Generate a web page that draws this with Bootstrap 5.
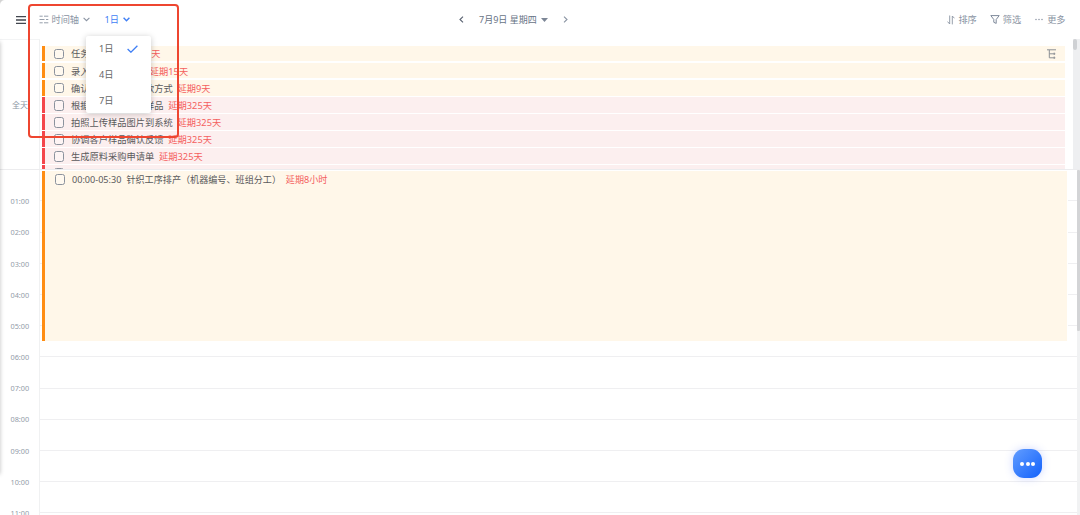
<!DOCTYPE html>
<html lang="zh-CN">
<head>
<meta charset="utf-8">
<title>时间轴</title>
<link rel="stylesheet" href="https://cdn.jsdelivr.net/npm/bootstrap@5.3.0/dist/css/bootstrap.min.css">
<style>
body{font-family:"Noto Sans","Noto Sans CJK SC",sans-serif;font-size:9.25px;line-height:15px;color:#5a5a5c;background:#fff}
svg{display:block;flex:none}
.app{width:1080px;height:515px}
.app::before{content:"";position:absolute;left:-6px;top:42px;width:6px;height:432px;box-shadow:0 0 4px rgba(0,0,0,.25)}
.corner{left:0;top:0;width:5px;height:5px;background:radial-gradient(circle at 5px 5px,#fff 4.5px,#d4d4d4 5.5px)}
.topbar{height:39px;color:#8a94a3;font-size:9.2px;padding-left:16px;padding-right:14.5px}
.topbar .side{width:443px}
.blue{color:#3f7ff5}
.date{color:#687385;font-size:9px}
.allday{height:130px}
.gutter{width:40px;border-right:1px solid #f0f1f2;color:#8c95a3;flex:none}
.allday .gutter{border-top:1px solid #f3f4f5;font-size:8px;padding-left:12px}
.tasks{padding:6.6px 0 0 1.5px;width:1024.5px;gap:1.4px}
.task{height:15.72px;flex:none;border-left:3px solid #ff8d12;background:#fff7e9;padding-left:9px;padding-top:1px}
.task.late{border-color:#f4464b;background:#fcefef}
.box{width:10.5px;height:10.5px;border:1px solid #8b929d;border-radius:2.5px;margin-right:7px;flex:none;background:rgba(255,255,255,.3)}
.due{color:#f4605e;margin-left:4.8px}
.rail{width:7px;background:#eeeff1}
.thumb{width:4px;height:11px;background:#cfd1d4;border-radius:2px}
.timeline{height:346px;border-top:1px solid #ececee}
.timeline .gutter{font-size:7.3px;line-height:10px;padding-top:26.2px;color:#929ba8}
.hour{height:31.18px;padding-left:10.5px}
.hours{width:1037px;padding-top:.3px}
.slot{height:31.18px;border-bottom:1px solid #efeff1}
.event{left:2px;top:1.3px;width:1026px;height:169.3px;border-left:3px solid #ff8d12;background:#fff7e9;border-right:1px solid #fff;padding:.8px 0 0 9.5px;font-size:9.1px}
.rail2{width:3px;background:#f1f2f3}
.rail2 .thumb{width:3px;height:161px;background:#d3d4d6;border-radius:1px}
.picker{left:86px;top:36px;width:65px;height:77px;background:#fff;border-radius:2px;box-shadow:0 1px 6px rgba(0,0,0,.22);color:#666;z-index:3}
.picker .opt{height:26px;padding:0 13px 1px 13px}
.frame{left:28px;top:4px;width:151px;height:134px;border:2px solid #ee4630;border-radius:4px;z-index:4}
.fab{left:1013px;top:449px;width:29px;height:29px;border-radius:11px;background:linear-gradient(135deg,#629dff,#1261fb);box-shadow:0 0 8px rgba(64,100,255,.25);gap:1.7px}
.fab i{width:4px;height:4px;border-radius:50%;background:#fff}
.tree{right:24px;top:49px}
</style>
</head>
<body>
<div class="app position-relative overflow-hidden">
  <div class="corner position-absolute"></div>
  <header class="topbar d-flex align-items-center">
    <div class="side d-flex align-items-center">
      <svg width="10" height="10" viewBox="0 0 10 10" stroke="#41464e" stroke-width="1.3"><path d="M0 1.7h10M0 5h10M0 8.3h10"/></svg>
      <svg style="margin-left:13px" width="10" height="9" viewBox="0 0 10 9" stroke="#8a94a3" stroke-width=".9"><path d="M.5 1.2h3.2M5 1.2h4.3M.5 4.5h5M7 4.5h2.3M.5 7.8h3.2M5 7.8h4.3"/></svg>
      <span style="margin-left:2.5px">时间轴</span>
      <svg style="margin-left:4px" width="7" height="5" viewBox="0 0 7 5" fill="none" stroke="#8a94a3" stroke-width="1.1"><path d="M.6.8 3.5 3.7 6.4.8"/></svg>
      <span class="blue" style="margin-left:14.5px">1日</span>
      <svg style="margin-left:4px" width="7" height="5" viewBox="0 0 7 5" fill="none" stroke="#3f7ff5" stroke-width="1.4"><path d="M.6.8 3.5 3.7 6.4.8"/></svg>
    </div>
    <div class="date d-flex align-items-center">
      <svg width="5" height="7" viewBox="0 0 5 7" fill="none" stroke="#596271" stroke-width="1.1"><path d="M4 .6 1 3.5 4 6.4"/></svg>
      <span style="margin-left:15px">7月9日 星期四</span>
      <svg style="margin-left:4px" width="7" height="4" viewBox="0 0 7 4" fill="#7c8696"><path d="M0 0h7L3.5 4z"/></svg>
      <svg style="margin-left:15px" width="5" height="7" viewBox="0 0 5 7" fill="none" stroke="#8a94a3" stroke-width="1.1"><path d="M1 .6 4 3.5 1 6.4"/></svg>
    </div>
    <div class="d-flex align-items-center ms-auto">
      <svg width="8" height="10" viewBox="0 0 8 10" fill="none" stroke="#8a94a3" stroke-width=".9"><path d="M2.7 .5v8.5L.5 6.6M5.3 9.4V1l2.2 2.3"/></svg>
      <span style="margin-left:3.5px">排序</span>
      <svg style="margin-left:13px" width="10" height="9" viewBox="0 0 10 9" fill="none" stroke="#7e899a"><path d="M.8.6h8.4L6.2 4.5v3.9L3.8 7.3V4.5z"/></svg>
      <span style="margin-left:3px">筛选</span>
      <svg style="margin-left:14px" width="8" height="3" viewBox="0 0 8 3" fill="#8a94a3"><circle cx="1" cy="1.5" r=".75"/><circle cx="4" cy="1.5" r=".75"/><circle cx="7" cy="1.5" r=".75"/></svg>
      <span style="margin-left:4px">更多</span>
    </div>
  </header>

  <section class="allday d-flex overflow-hidden">
    <div class="gutter d-flex align-items-center">全天</div>
    <div class="tasks d-flex flex-column">
      <div class="task d-flex align-items-center"><span class="box"></span>任务单确认<span class="due">延期15天</span></div>
      <div class="task d-flex align-items-center"><span class="box"></span>录入样品开发信息<span class="due">延期15天</span></div>
      <div class="task d-flex align-items-center"><span class="box"></span>确认客户样品与付款方式<span class="due">延期9天</span></div>
      <div class="task late d-flex align-items-center"><span class="box"></span>根据客户要求制作样品<span class="due">延期325天</span></div>
      <div class="task late d-flex align-items-center"><span class="box"></span>拍照上传样品图片到系统<span class="due">延期325天</span></div>
      <div class="task late d-flex align-items-center"><span class="box"></span>协调客户样品确认反馈<span class="due">延期325天</span></div>
      <div class="task late d-flex align-items-center"><span class="box"></span>生成原料采购申请单<span class="due">延期325天</span></div>
      <div class="task late d-flex align-items-center"><span class="box"></span></div>
    </div>
    <div class="rail ms-auto"><div class="thumb"></div></div>
  </section>

  <section class="timeline d-flex overflow-hidden">
    <div class="gutter">
      <div class="hour">01:00</div><div class="hour">02:00</div><div class="hour">03:00</div><div class="hour">04:00</div><div class="hour">05:00</div><div class="hour">06:00</div><div class="hour">07:00</div><div class="hour">08:00</div><div class="hour">09:00</div><div class="hour">10:00</div><div class="hour">11:00</div>
    </div>
    <div class="hours position-relative">
      <div class="slot"></div><div class="slot"></div><div class="slot"></div><div class="slot"></div><div class="slot"></div><div class="slot"></div><div class="slot"></div><div class="slot"></div><div class="slot"></div><div class="slot"></div><div class="slot"></div>
      <div class="event position-absolute">
        <div class="d-flex align-items-center"><span class="box"></span>00:00-05:30<span style="margin-left:5px">针织工序排产（机器编号、班组分工）</span><span class="due">延期8小时</span></div>
      </div>
    </div>
    <div class="rail2"><div class="thumb"></div></div>
  </section>

  <svg class="tree position-absolute" width="9" height="10" viewBox="0 0 9 10" fill="none" stroke="#8b8f94"><path d="M0 .8h9M2.3 1v7.8h6M2.3 4.8h6M7.2 3.6v2.4M7.2 7.5v2.4"/></svg>

  <div class="picker position-absolute">
    <div class="opt d-flex align-items-center justify-content-between">1日
      <svg width="11" height="8" viewBox="0 0 11 8" fill="none" stroke="#3f7ff5" stroke-width="1.3"><path d="M.6 4 3.9 7.2 10.4.7"/></svg></div>
    <div class="opt d-flex align-items-center">4日</div>
    <div class="opt d-flex align-items-center">7日</div>
  </div>
  <div class="frame position-absolute"></div>
  <div class="fab position-absolute d-flex align-items-center justify-content-center"><i></i><i></i><i></i></div>
</div>
<script src="https://cdn.jsdelivr.net/npm/bootstrap@5.3.0/dist/js/bootstrap.bundle.min.js"></script>
</body>
</html>
